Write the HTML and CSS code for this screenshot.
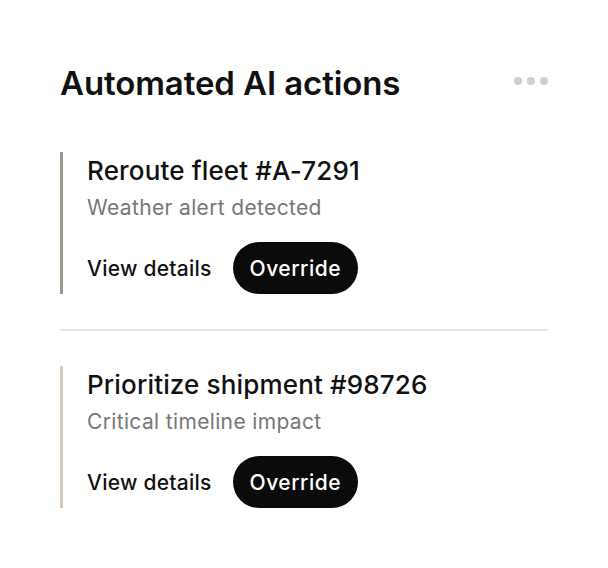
FILE: index.html
```html
<!DOCTYPE html>
<html lang="en">
<head>
<meta charset="utf-8">
<link rel="stylesheet" href="styles.css">
</head>
<body>
<section class="panel">
  <header class="panel-header">
    <h1 class="panel-title">Automated AI actions</h1>
    <button class="more" aria-label="More options"><span></span><span></span><span></span></button>
  </header>
  <div class="action action-primary">
    <h2 class="action-title">Reroute fleet #A-7291</h2>
    <p class="action-desc">Weather alert detected</p>
    <div class="action-buttons">
      <a class="link">View details</a>
      <button class="override">Override</button>
    </div>
  </div>
  <hr class="divider">
  <div class="action action-secondary">
    <h2 class="action-title">Prioritize shipment #98726</h2>
    <p class="action-desc">Critical timeline impact</p>
    <div class="action-buttons">
      <a class="link">View details</a>
      <button class="override">Override</button>
    </div>
  </div>
</section>
</body>
</html>
```
FILE: styles.css
```css
* { box-sizing: border-box; }
html, body { margin: 0; background: #fff; }
body { font-family: Inter, "Noto Sans", sans-serif; color: #111; }
.panel { width: 608px; padding: 63px 60px 40px; }
.panel-header { display: flex; align-items: center; justify-content: space-between; margin-bottom: 49px; }
.panel-title { margin: 0; font-size: 33px; line-height: 40px; font-weight: 600; letter-spacing: -0.1px; color: #111; }
.more { display: flex; gap: 5px; padding: 0; border: 0; background: none; margin-top: -4px; }
.more span { width: 8px; height: 8px; border-radius: 50%; background: #cfcfcf; }
.action { border-left: 3px solid #9b9b8e; padding-left: 24px; }
.action-secondary { border-left-color: #d6cbb9; }
.action-title { margin: 0; font-size: 26px; line-height: 38px; font-weight: 500; letter-spacing: 0.15px; color: #111; }
.action-desc { margin: 4px 0 0; font-size: 21px; line-height: 28px; color: #777; letter-spacing: 0.35px; }
.action-buttons { display: flex; align-items: center; gap: 21px; margin-top: 20px; }
.link { font-size: 21px; font-weight: 500; color: #111; letter-spacing: 0.25px; }
.override { border: 0; background: #0b0b0b; color: #fff; font-family: inherit; font-size: 21px; font-weight: 500; letter-spacing: 0.5px; height: 52px; padding: 0 17px; border-radius: 26px; }
.divider { border: 0; border-top: 2px solid #e6e6e6; margin: 35px 0 35px; }
```
